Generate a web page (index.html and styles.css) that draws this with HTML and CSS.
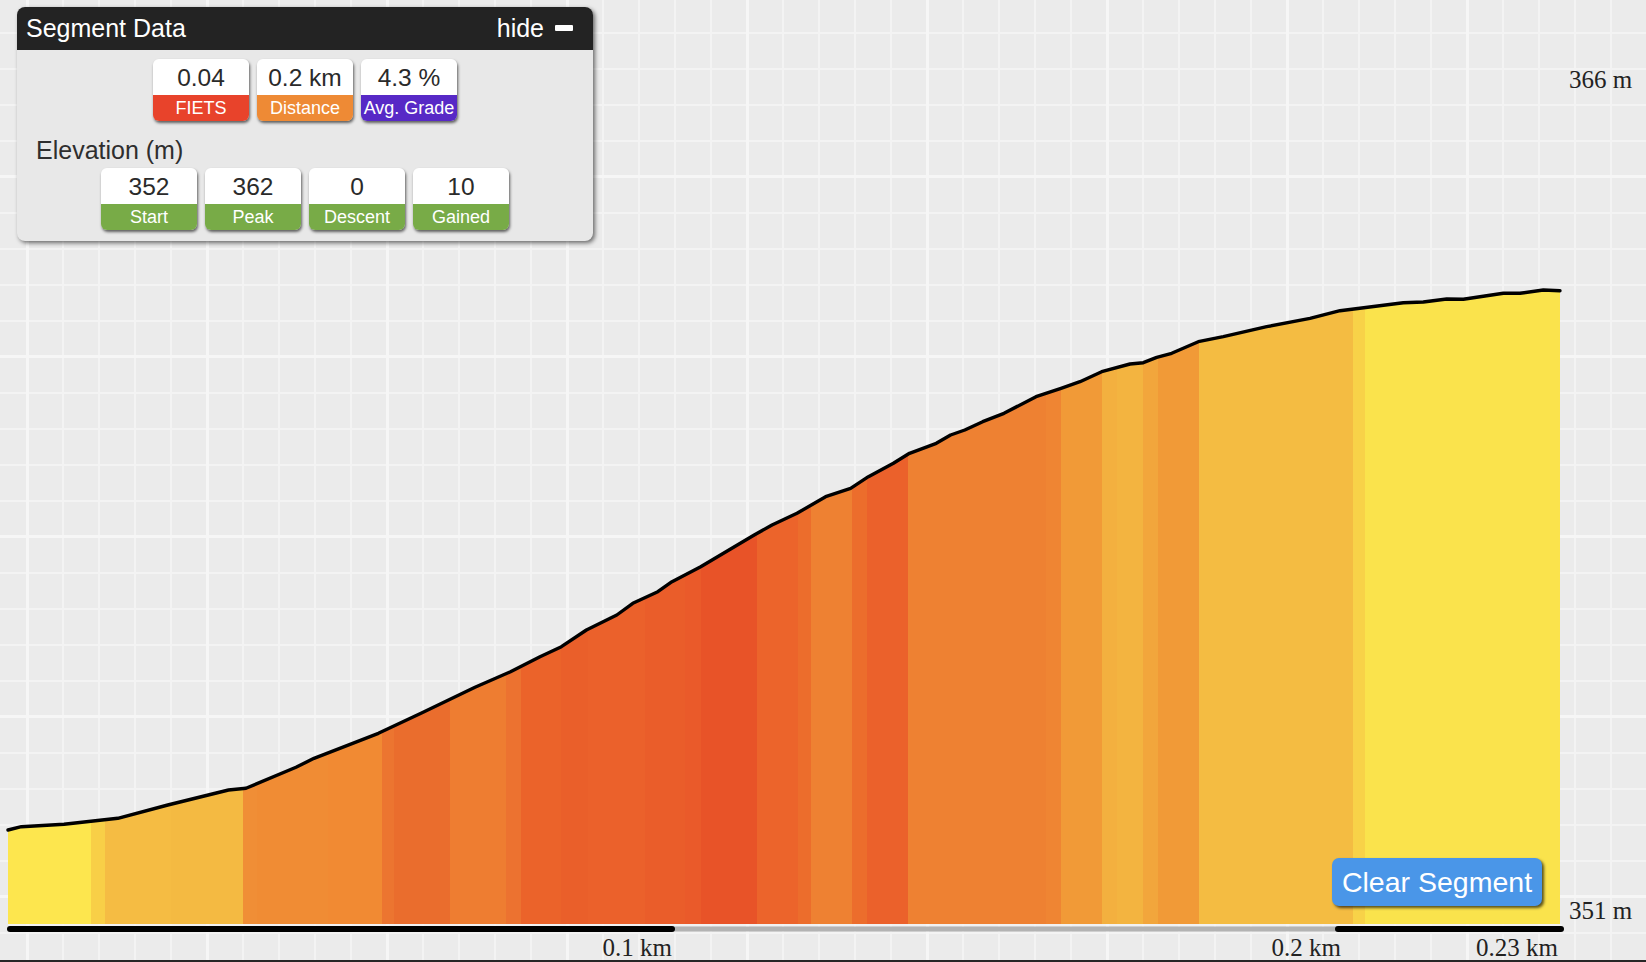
FILE: index.html
```html
<!DOCTYPE html>
<html>
<head>
<meta charset="utf-8">
<title>Segment Data</title>
<link rel="stylesheet" href="styles.css">
</head>
<body>
<div class="page">
  <svg class="chart" width="1646" height="960" viewBox="0 0 1646 960" xmlns="http://www.w3.org/2000/svg">
    <defs>
      <clipPath id="area">
        <polygon points="8,830 21.4,826.7 64,824.3 117.8,818.3 167.8,805 228.5,790 246,788.3 296,767.3 314,758.3 378.4,733.3 421,713.3 475,687.3 510.5,671.7 540,656.7 561.4,646.7 586.4,630 616.8,615 632.8,603.3 657.8,591.7 672,581.7 700.7,566.7 754.2,535 772,525 797,513.3 825.6,496.7 850.6,488.3 868.4,476.7 893.4,463.3 909.5,453.3 936.3,443.3 950.6,435 964.8,430 982.7,421.7 1004,413.3 1036,396.7 1061,388.3 1080,381.7 1101.7,371.7 1130,364 1143.3,362.7 1156.7,357.3 1171.7,353.3 1198.3,341.7 1223.3,336.7 1266.7,326.7 1310,318.3 1340,310.7 1403.3,302.7 1423.3,302 1446.7,299 1463.3,299.3 1503.3,293.3 1520,293.3 1543.3,290 1560,290.7 1560,924 8,924"/>
      </clipPath>
    </defs>
    <g clip-path="url(#area)">
      <rect x="8" y="280" width="83.5" height="644" fill="#fde64e"/>
      <rect x="91" y="280" width="14.5" height="644" fill="#f8cf47"/>
      <rect x="105" y="280" width="66.5" height="644" fill="#f5bc43"/>
      <rect x="171" y="280" width="72.5" height="644" fill="#f4ba42"/>
      <rect x="243" y="280" width="14.5" height="644" fill="#f08e36"/>
      <rect x="257" y="280" width="71.5" height="644" fill="#f08c34"/>
      <rect x="328" y="280" width="54.5" height="644" fill="#f18a33"/>
      <rect x="382" y="280" width="12.5" height="644" fill="#ec7530"/>
      <rect x="394" y="280" width="56.5" height="644" fill="#ea6d2d"/>
      <rect x="450" y="280" width="56.5" height="644" fill="#ee7d31"/>
      <rect x="506" y="280" width="15.5" height="644" fill="#ec7230"/>
      <rect x="521" y="280" width="40.5" height="644" fill="#eb632a"/>
      <rect x="561" y="280" width="27.5" height="644" fill="#ea5f2a"/>
      <rect x="588" y="280" width="57.5" height="644" fill="#eb612b"/>
      <rect x="645" y="280" width="40.5" height="644" fill="#ea5d2a"/>
      <rect x="685" y="280" width="16.5" height="644" fill="#ea5a2a"/>
      <rect x="701" y="280" width="56.5" height="644" fill="#e85328"/>
      <rect x="757" y="280" width="41.5" height="644" fill="#ec642b"/>
      <rect x="798" y="280" width="13.5" height="644" fill="#ec6d2c"/>
      <rect x="811" y="280" width="41.5" height="644" fill="#ee8132"/>
      <rect x="852" y="280" width="15.5" height="644" fill="#ec6d2c"/>
      <rect x="867" y="280" width="41.5" height="644" fill="#eb612b"/>
      <rect x="908" y="280" width="138.5" height="644" fill="#ee8132"/>
      <rect x="1046" y="280" width="15.5" height="644" fill="#ef8533"/>
      <rect x="1061" y="280" width="41.5" height="644" fill="#f19a37"/>
      <rect x="1102" y="280" width="15.5" height="644" fill="#f3b03f"/>
      <rect x="1117" y="280" width="26.5" height="644" fill="#f3b440"/>
      <rect x="1143" y="280" width="15.5" height="644" fill="#f2a63c"/>
      <rect x="1158" y="280" width="41.5" height="644" fill="#f19a37"/>
      <rect x="1199" y="280" width="154.5" height="644" fill="#f4bc42"/>
      <rect x="1353" y="280" width="12.5" height="644" fill="#f8d248"/>
      <rect x="1365" y="280" width="195" height="644" fill="#fae34c"/>
    </g>
    <polyline class="profile" points="8,830 21.4,826.7 64,824.3 117.8,818.3 167.8,805 228.5,790 246,788.3 296,767.3 314,758.3 378.4,733.3 421,713.3 475,687.3 510.5,671.7 540,656.7 561.4,646.7 586.4,630 616.8,615 632.8,603.3 657.8,591.7 672,581.7 700.7,566.7 754.2,535 772,525 797,513.3 825.6,496.7 850.6,488.3 868.4,476.7 893.4,463.3 909.5,453.3 936.3,443.3 950.6,435 964.8,430 982.7,421.7 1004,413.3 1036,396.7 1061,388.3 1080,381.7 1101.7,371.7 1130,364 1143.3,362.7 1156.7,357.3 1171.7,353.3 1198.3,341.7 1223.3,336.7 1266.7,326.7 1310,318.3 1340,310.7 1403.3,302.7 1423.3,302 1446.7,299 1463.3,299.3 1503.3,293.3 1520,293.3 1543.3,290 1560,290.7"/>
    <line class="base-sep" x1="8" y1="925" x2="1562" y2="925"/>
    <line class="bar-gray" x1="672" y1="929" x2="1338" y2="929"/>
    <line class="bar-black" x1="10" y1="929" x2="672" y2="929"/>
    <line class="bar-black" x1="1338" y1="929" x2="1561" y2="929"/>
    <text class="axis" x="1569" y="88">366 m</text>
    <text class="axis" x="1569" y="919">351 m</text>
    <text class="axis end" x="672" y="956">0.1 km</text>
    <text class="axis end" x="1341" y="956">0.2 km</text>
    <text class="axis end" x="1558" y="956">0.23 km</text>
  </svg>

  <div class="panel">
    <div class="panel-head">
      <span class="panel-title">Segment Data</span>
      <span class="hide">hide <span class="minus"></span></span>
    </div>
    <div class="panel-body">
      <div class="badges">
        <div class="badge"><div class="val">0.04</div><div class="lab red">FIETS</div></div>
        <div class="badge"><div class="val">0.2 km</div><div class="lab orange">Distance</div></div>
        <div class="badge"><div class="val">4.3 %</div><div class="lab purple">Avg. Grade</div></div>
      </div>
      <div class="section">Elevation (m)</div>
      <div class="badges">
        <div class="badge"><div class="val">352</div><div class="lab green">Start</div></div>
        <div class="badge"><div class="val">362</div><div class="lab green">Peak</div></div>
        <div class="badge"><div class="val">0</div><div class="lab green">Descent</div></div>
        <div class="badge"><div class="val">10</div><div class="lab green">Gained</div></div>
      </div>
    </div>
  </div>

  <button class="clear-btn">Clear Segment</button>
</div>
<div class="footer-strip"></div>
</body>
</html>
```

FILE: styles.css
```css
html, body {
  margin: 0;
  padding: 0;
  height: 962px;
  overflow: hidden;
}

body {
  background: #ebebeb;
  font-family: "Liberation Sans", Arial, sans-serif;
}

.page {
  position: relative;
  height: 960px;
  background-color: #ebebeb;
  background-image:
    linear-gradient(90deg, #f6f6f6 3px, transparent 3px),
    linear-gradient(180deg, #f6f6f6 3px, transparent 3px),
    linear-gradient(90deg, #f3f3f3 2px, transparent 2px),
    linear-gradient(180deg, #f3f3f3 2px, transparent 2px);
  background-size: 180px 100%, 100% 180px, 36px 100%, 100% 36px;
  background-position: 206px 0, 0 175px, 26px 0, 0 32px;
}

.footer-strip {
  height: 2px;
  background: #262626;
}

.chart {
  display: block;
}

.profile {
  fill: none;
  stroke: #000;
  stroke-width: 3.4;
  stroke-linejoin: round;
  stroke-linecap: round;
}

.base-sep {
  stroke: #f4f4f4;
  stroke-width: 1.5;
}

.bar-gray {
  stroke: #b3b3b3;
  stroke-width: 5;
}

.bar-black {
  stroke: #000;
  stroke-width: 6;
  stroke-linecap: round;
}

.axis {
  font-family: "Liberation Serif", "Times New Roman", serif;
  font-size: 25px;
  fill: #222;
}

.axis.end {
  text-anchor: end;
}

/* Segment data panel */
.panel {
  position: absolute;
  left: 17px;
  top: 7px;
  width: 576px;
  background: #e8e8e8;
  border-radius: 8px;
  box-shadow: 2px 2px 4px rgba(0, 0, 0, 0.55);
  overflow: hidden;
}

.panel-head {
  height: 43px;
  background: #232323;
  color: #fff;
  display: flex;
  align-items: center;
  justify-content: space-between;
  padding: 0 20px 0 9px;
  font-size: 25px;
}

.hide {
  display: flex;
  align-items: center;
  gap: 11px;
}

.minus {
  display: inline-block;
  width: 18px;
  height: 6px;
  background: #fff;
  border-radius: 1px;
  margin-top: -2px;
}

.panel-body {
  padding: 9px 0 11px 0;
}

.badges {
  display: flex;
  justify-content: center;
  gap: 8px;
}

.badge {
  width: 96px;
  height: 62px;
  border-radius: 6px;
  overflow: hidden;
  box-shadow: 1px 2px 3px rgba(0, 0, 0, 0.6);
  display: flex;
  flex-direction: column;
  text-align: center;
}

.val {
  height: 36px;
  line-height: 37px;
  background: #fff;
  color: #2a2a2a;
  font-size: 24.5px;
}

.lab {
  height: 26px;
  line-height: 26px;
  color: #fff;
  font-size: 18px;
  white-space: nowrap;
}

.red { background: #e8432b; }
.orange { background: #ee8a35; }
.purple { background: #5729c6; }
.green { background: #78ab47; }

.section {
  height: 30px;
  line-height: 30px;
  padding: 14px 0 3px 19px;
  font-size: 25px;
  color: #2e2e2e;
}

.clear-btn {
  position: absolute;
  left: 1332px;
  top: 858px;
  width: 210px;
  height: 48px;
  padding: 0;
  border: none;
  border-radius: 7px;
  background: #4a96e8;
  color: #fff;
  font-family: "Liberation Sans", Arial, sans-serif;
  font-size: 28.5px;
  line-height: 48px;
  text-align: center;
  box-shadow: 2px 2px 3px rgba(0, 0, 0, 0.65);
}
```
